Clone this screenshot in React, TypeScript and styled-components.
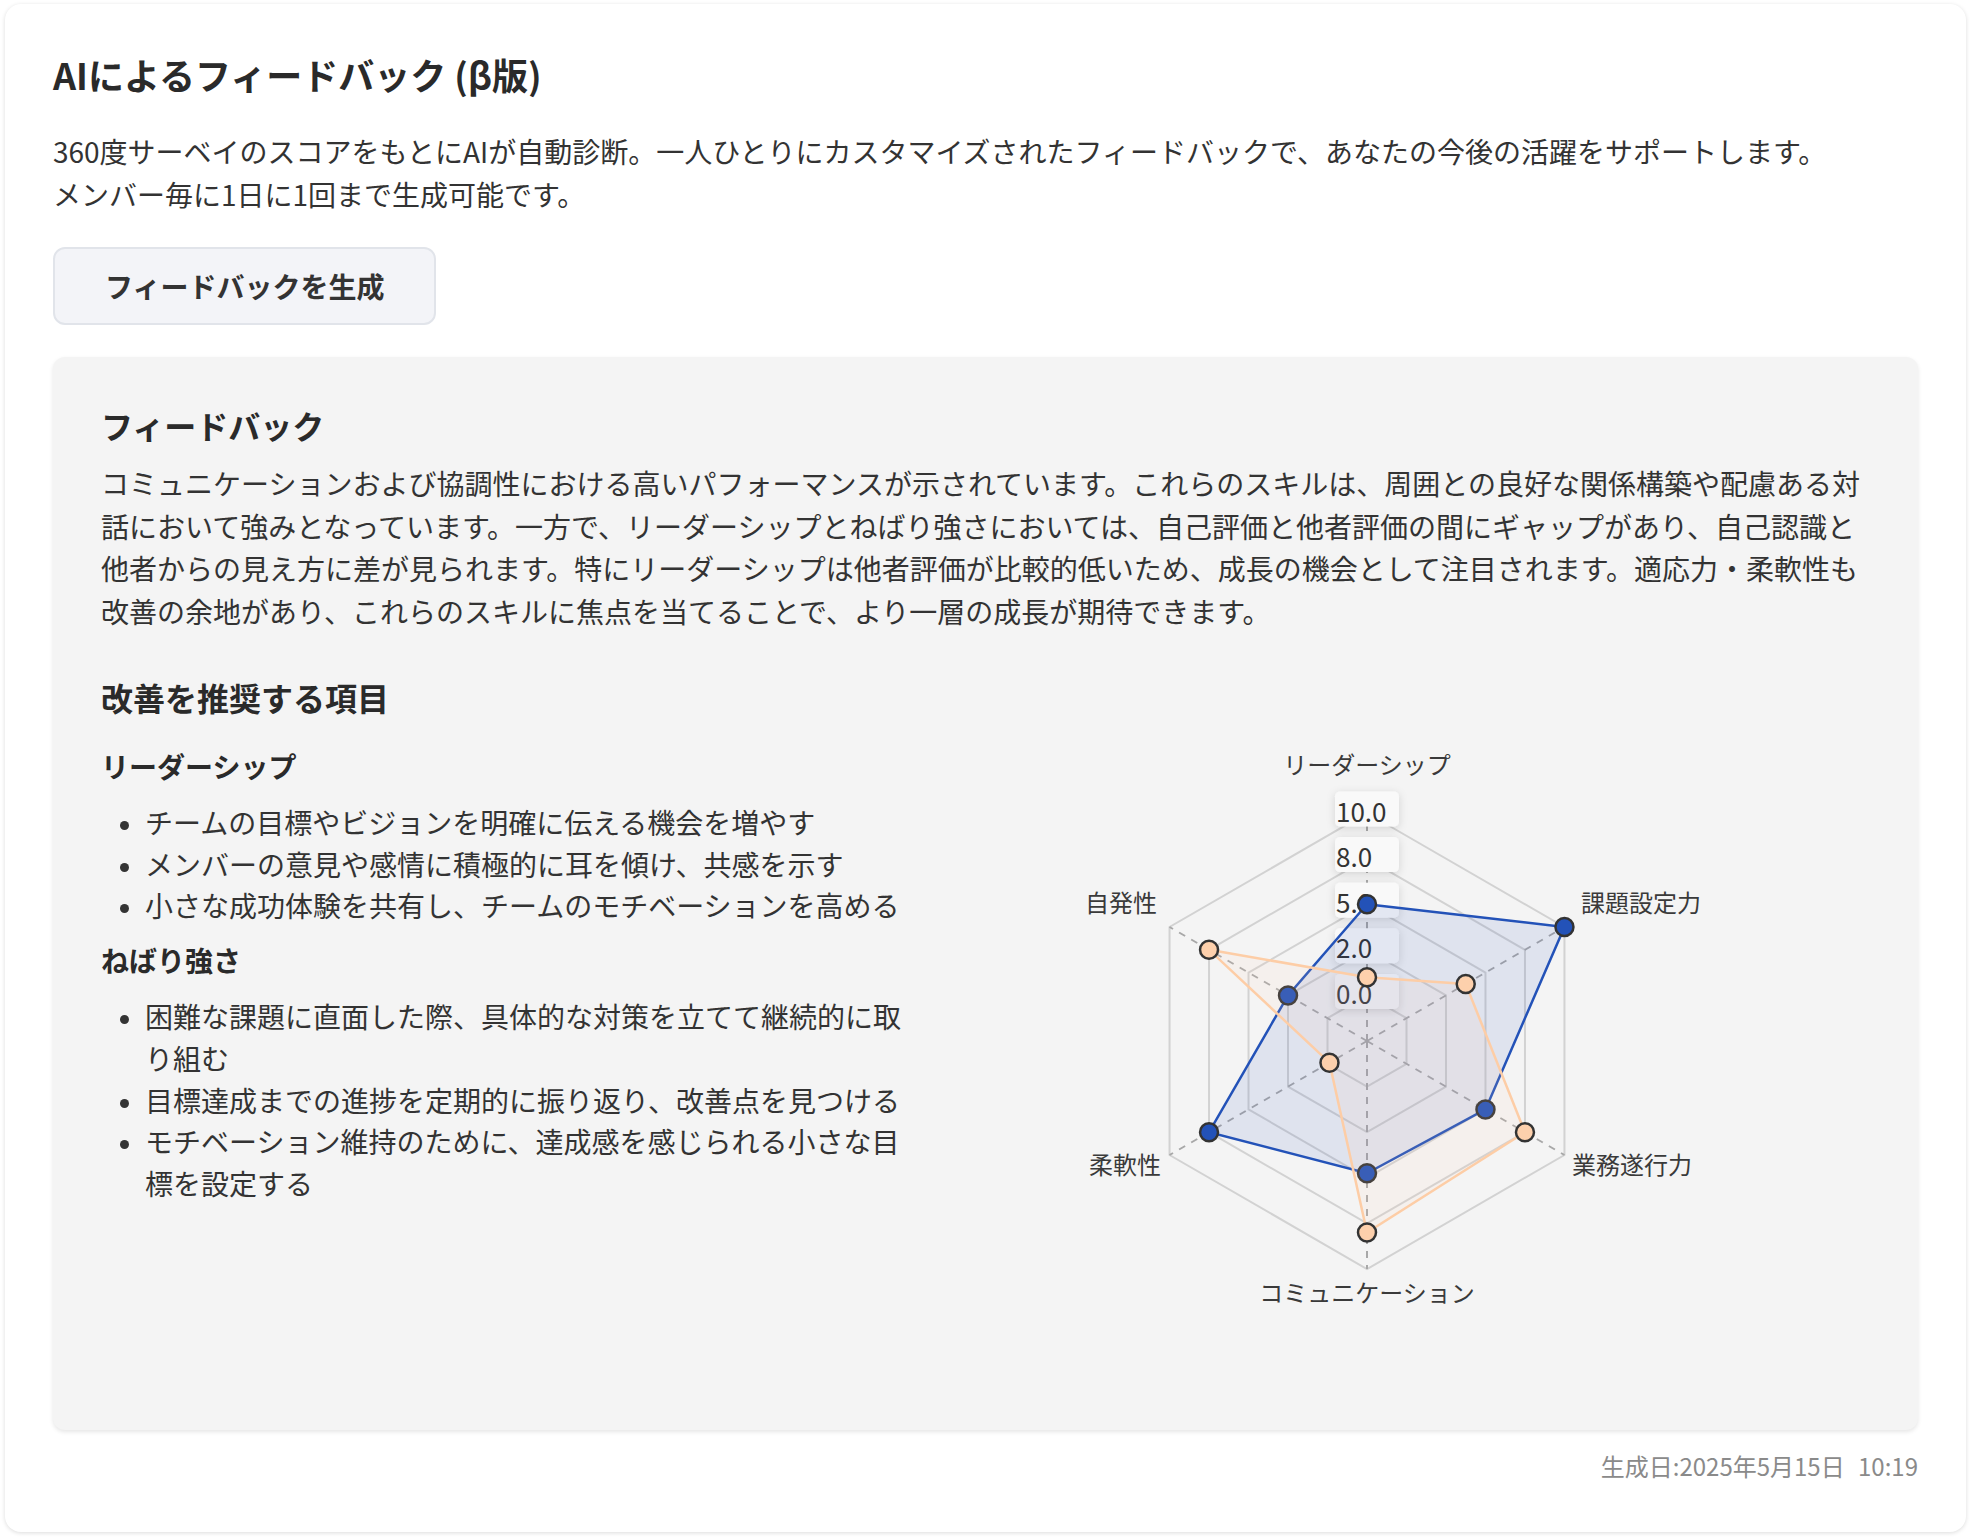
import React from 'react';
import styled, { createGlobalStyle } from 'styled-components';

const GlobalStyle = createGlobalStyle`
  html, body {
    margin: 0;
    padding: 0;
    background: #ffffff;
  }
  body {
    font-family: "Noto Sans CJK JP", "Noto Sans", sans-serif;
    color: #333333;
  }
`;

const Page = styled.div`
  padding: 4px 6px 8px 5px;
`;

const Card = styled.section`
  background: #ffffff;
  border-radius: 16px;
  box-shadow: 0 1px 4px rgba(0, 0, 0, 0.14);
  padding: 48px;
`;

const Title = styled.h1`
  margin: 0 0 33px;
  font-size: 36px;
  line-height: 45px;
  font-weight: 700;
  color: #2a2a2a;
`;

const Lead = styled.p`
  margin: 0;
  font-size: 28px;
  line-height: 42.5px;
  color: #333333;
`;

const GenerateButton = styled.button`
  margin-top: 32px;
  padding: 16px 50px;
  font-family: inherit;
  font-size: 28px;
  line-height: 42px;
  font-weight: 700;
  color: #333333;
  background: #f3f4f8;
  border: 2px solid #e1e4ea;
  border-radius: 12px;
  cursor: pointer;
`;

const Panel = styled.div`
  margin-top: 32px;
  background: #f4f4f4;
  border-radius: 12px;
  box-shadow: 0 2px 4px rgba(0, 0, 0, 0.1);
  padding: 48px;
`;

const SectionTitle = styled.h2<{ $top?: number }>`
  margin: ${(p) => p.$top ?? 0}px 0 0;
  font-size: 32px;
  line-height: 40px;
  font-weight: 700;
  color: #2a2a2a;
`;

const Paragraph = styled.p`
  margin: 17px 0 0;
  font-size: 28px;
  line-height: 42.5px;
`;

const Columns = styled.div`
  margin-top: 28px;
  display: grid;
  grid-template-columns: 813px 906px;
  align-items: start;
`;

const Recommend = styled.div`
  display: flex;
  flex-direction: column;
`;

const SkillName = styled.h3<{ $top?: number }>`
  margin: ${(p) => p.$top ?? 0}px 0 0;
  font-size: 28px;
  line-height: 42px;
  font-weight: 700;
  color: #2a2a2a;
`;

const Tips = styled.ul`
  margin: 15px 0 0;
  padding-left: 44px;
  font-size: 28px;
  line-height: 41.7px;

  li::marker {
    font-size: 24px;
  }
`;

const ChartBox = styled.div`
  width: 906px;
  height: 637px;
`;

const Stamp = styled.div`
  margin-top: 18px;
  text-align: right;
  font-size: 24px;
  line-height: 36px;
  color: #8a8a8a;
`;

const Time = styled.span`
  margin-left: 8px;
`;

const axes = ['リーダーシップ', '課題設定力', '業務遂行力', 'コミュニケーション', '柔軟性', '自発性'];

const series = [
  { name: '他者評価', values: [0.6, 1.0, 0.6, 0.58, 0.8, 0.4], line: '#2352b8', dot: '#2352b8' },
  { name: '自己評価', values: [0.28, 0.5, 0.8, 0.84, 0.19, 0.8], line: '#fdcda6', dot: '#fdd0ac' },
];

const ticks = ['0.0', '2.0', '5.0', '8.0', '10.0'];

const labelPlacement = [
  { dx: 0, dy: -278, anchor: 'middle' },
  { dx: 214, dy: -140, anchor: 'start' },
  { dx: 205, dy: 122, anchor: 'start' },
  { dx: 0, dy: 250, anchor: 'middle' },
  { dx: -206, dy: 122, anchor: 'end' },
  { dx: -210, dy: -140, anchor: 'end' },
];

function RadarChart() {
  const cx = 453;
  const cy = 296;
  const R = 228;
  const point = (i: number, f: number) => {
    const a = ((-90 + 60 * i) * Math.PI) / 180;
    return [cx + R * f * Math.cos(a), cy + R * f * Math.sin(a)];
  };
  const poly = (fs: number[]) => fs.map((f, i) => point(i, f).join(',')).join(' ');
  const levels = [0.2, 0.4, 0.6, 0.8, 1];

  return (
    <svg width={906} height={637} viewBox="0 0 906 637">
      <defs>
        <filter id="tickShadow" x="-30%" y="-40%" width="160%" height="180%">
          <feDropShadow dx="0" dy="2" stdDeviation="4" floodColor="#000" floodOpacity="0.14" />
        </filter>
      </defs>
      {levels.map((l) => (
        <polygon key={l} points={poly(axes.map(() => l))} fill="none" stroke="#d2d2d2" strokeWidth={2} />
      ))}
      {axes.map((_, i) => {
        const [x, y] = point(i, 1);
        return <line key={i} x1={cx} y1={cy} x2={x} y2={y} stroke="#a8a8a8" strokeWidth={2} strokeDasharray="7 7" />;
      })}
      {ticks.map((t, k) => {
        const y = cy - R * levels[k] - 4;
        return (
          <g key={t}>
            <rect x={cx - 32} y={y - 17.5} width={64} height={35} rx={5} fill="#f9f9f9" filter="url(#tickShadow)" />
            <text x={cx - 31} y={y + 1} fontSize={26} fill="#333" dominantBaseline="central" fontFamily='"Noto Sans CJK JP", sans-serif'>
              {t}
            </text>
          </g>
        );
      })}
      {series.map((s) => (
        <g key={s.name}>
          <polygon points={poly(s.values)} fill={s.dot} fillOpacity={0.1} stroke={s.line} strokeWidth={2.5} />
          {s.values.map((f, i) => {
            const [x, y] = point(i, f);
            return <circle key={i} cx={x} cy={y} r={9} fill={s.dot} stroke="#333" strokeWidth={2.5} />;
          })}
        </g>
      ))}
      {axes.map((a, i) => {
        const p = labelPlacement[i];
        return (
          <text
            key={a}
            x={cx + p.dx}
            y={cy + p.dy}
            fontSize={24}
            fill="#3a3a3a"
            textAnchor={p.anchor as 'middle' | 'start' | 'end'}
            dominantBaseline="central"
            fontFamily='"Noto Sans CJK JP", sans-serif'
          >
            {a}
          </text>
        );
      })}
    </svg>
  );
}

export default function App() {
  return (
    <Page>
      <GlobalStyle />
      <Card>
        <Title>AIによるフィードバック (β版)</Title>
        <Lead>
          360度サーベイのスコアをもとにAIが自動診断。一人ひとりにカスタマイズされたフィードバックで、あなたの今後の活躍をサポートします。
          <br />
          メンバー毎に1日に1回まで生成可能です。
        </Lead>
        <GenerateButton type="button">フィードバックを生成</GenerateButton>

        <Panel>
          <SectionTitle>フィードバック</SectionTitle>
          <Paragraph>
            コミュニケーションおよび協調性における高いパフォーマンスが示されています。これらのスキルは、周囲との良好な関係構築や配慮ある対話において強みとなっています。一方で、リーダーシップとねばり強さにおいては、自己評価と他者評価の間にギャップがあり、自己認識と他者からの見え方に差が見られます。特にリーダーシップは他者評価が比較的低いため、成長の機会として注目されます。適応力・柔軟性も改善の余地があり、これらのスキルに焦点を当てることで、より一層の成長が期待できます。
          </Paragraph>

          <SectionTitle $top={45}>改善を推奨する項目</SectionTitle>
          <Columns>
            <Recommend>
              <SkillName>リーダーシップ</SkillName>
              <Tips>
                <li>チームの目標やビジョンを明確に伝える機会を増やす</li>
                <li>メンバーの意見や感情に積極的に耳を傾け、共感を示す</li>
                <li>小さな成功体験を共有し、チームのモチベーションを高める</li>
              </Tips>
              <SkillName $top={12}>ねばり強さ</SkillName>
              <Tips>
                <li>困難な課題に直面した際、具体的な対策を立てて継続的に取り組む</li>
                <li>目標達成までの進捗を定期的に振り返り、改善点を見つける</li>
                <li>モチベーション維持のために、達成感を感じられる小さな目標を設定する</li>
              </Tips>
            </Recommend>
            <ChartBox>
              <RadarChart />
            </ChartBox>
          </Columns>
        </Panel>

        <Stamp>
          生成日:2025年5月15日 <Time>10:19</Time>
        </Stamp>
      </Card>
    </Page>
  );
}
